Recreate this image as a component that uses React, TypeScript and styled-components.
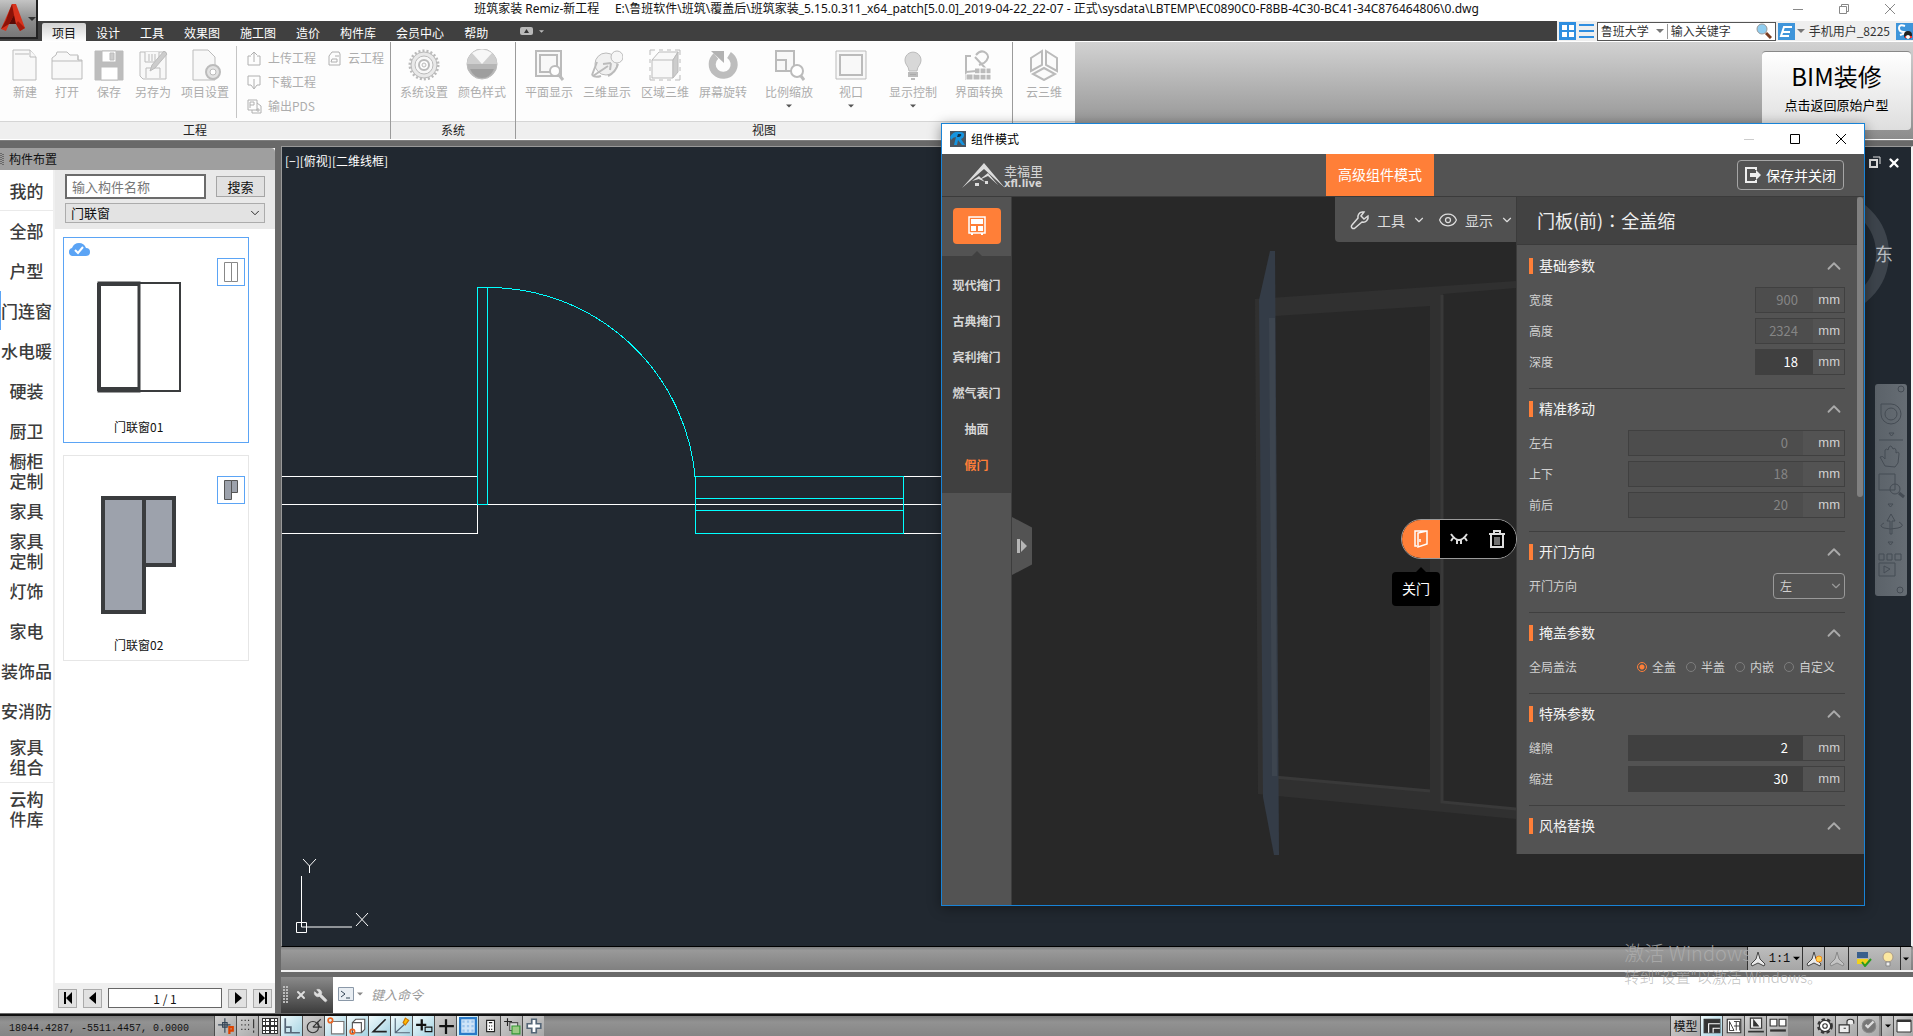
import React from 'react';
import styled, { createGlobalStyle, css } from 'styled-components';
import { ChevronDown, ChevronUp, Eye, Wrench, X } from 'lucide-react';

const orange = '#ff7f38';
const uiFont = '"Noto Sans CJK SC", "Liberation Sans", sans-serif';

const Global = createGlobalStyle`
  *, *::before, *::after { box-sizing: border-box; }
  html, body { margin: 0; height: 100%; overflow: hidden; }
  #root { height: 100%; }
  body { font: 12px/16px ${uiFont}; color: #111; background: #696969; }
  button, input, select { font: inherit; color: inherit; margin: 0; padding: 0; border: 0; background: none; border-radius: 0; outline: none; }
  svg { display: block; flex: none; }
`;

const Shell = styled.div`
  position: relative;
  display: flex;
  flex-direction: column;
  height: 100vh;
  overflow: hidden;
`;

/* ---------- header ---------- */
const Header = styled.header`
  display: flex;
  background: #404040;
`;
const HeaderRows = styled.div`
  flex: 1;
  min-width: 0;
  display: flex;
  flex-direction: column;
`;
const AppButton = styled.button`
  width: 38px;
  height: 39px;
  display: flex;
  align-items: center;
  gap: 2px;
  background: linear-gradient(#c4c4c4, #8c8c8c 55%, #777);
  border-right: 2px solid #222;
  border-bottom: 2px solid #222;
`;
const TitleBar = styled.div`
  display: flex;
  height: 21px;
  background: #fff;
`;
const TitleText = styled.div`
  flex: 1;
  padding-left: 140px;
  text-align: center;
  font-family: "Noto Sans", "Noto Sans CJK SC", sans-serif;
  line-height: 17px;
  white-space: pre;
  overflow: hidden;
`;
const WindowControls = styled.div<{ $h: number }>`
  display: flex;
  height: ${p => p.$h}px;
`;
const WindowButton = styled.button<{ $color: string }>`
  width: 46px;
  display: flex;
  align-items: center;
  justify-content: center;
  color: ${p => p.$color};
`;
const MenuBar = styled.nav`
  display: flex;
  height: 20px;
  padding-left: 4px;
  color: #fff;
`;
const MenuTab = styled.button<{ $active?: boolean }>`
  padding: 0 10px;
  line-height: 17px;
  align-self: flex-end;
  height: 18px;
  ${p => p.$active && css`
    color: #111;
    background: linear-gradient(#d2d2d2, #fdfdfd);
    border-radius: 2px 2px 0 0;
  `}
`;
const MenuExtra = styled.div`
  display: flex;
  align-items: center;
  gap: 6px;
  margin-left: 22px;
`;
const AccountStrip = styled.div`
  margin-left: auto;
  display: flex;
  align-items: center;
  gap: 2px;
  padding-left: 2px;
  background: #efefef;
  color: #333;
`;
const SearchBox = styled.div`
  display: flex;
  align-items: center;
  width: 179px;
  height: 19px;
  padding: 0 3px;
  border: 1px solid #555;
  background: #fff;
  & select { width: 66px; appearance: none; height: 17px; }
  & input { flex: 1; min-width: 0; height: 15px; padding-left: 3px; border-left: 1px solid #999; }
  & input::placeholder { color: #333; opacity: 1; }
`;
const SelectHolder = styled.label`
  display: flex;
  align-items: center;
  position: relative;
  & svg { position: absolute; right: 3px; pointer-events: none; }
`;
const UserName = styled.button`
  display: flex;
  align-items: center;
  gap: 4px;
  padding-right: 4px;
  white-space: nowrap;
`;

/* ---------- ribbon ---------- */
const Ribbon = styled.section`
  position: relative;
  display: flex;
  height: 99px;
  border-top: 1px solid #fff;
  border-bottom: 1px solid #fff;
  background: linear-gradient(#d2d2d2, #8c8c8c);
`;
const Group = styled.div<{ $w: number }>`
  width: ${p => p.$w}px;
  display: flex;
  flex-direction: column;
  background: #fdfdfd;
  border-right: 1px solid #9b9b9b;
  &:last-of-type { border-right: 0; }
`;
const GroupBody = styled.div`
  flex: 1;
  display: flex;
  padding: 0 4px;
  color: #adadad;
`;
const GroupName = styled.div`
  height: 18px;
  line-height: 16px;
  border-top: 1px solid #d5d5d5;
  background: #efefef;
  text-align: center;
  color: #222;
`;
const Tool = styled.button<{ $w: number }>`
  width: ${p => p.$w}px;
  display: flex;
  flex-direction: column;
  align-items: center;
  gap: 3px;
  padding-top: 7px;
  white-space: nowrap;
`;
const SmallTools = styled.div`
  display: grid;
  grid-template: repeat(3, 24px) / 80px auto;
  margin: 4px 0 0 2px;
  padding-left: 10px;
  border-left: 1px solid #c5c5c5;
  height: 72px;
`;
const SmallTool = styled.button<{ $row?: boolean }>`
  display: flex;
  align-items: center;
  gap: 6px;
  white-space: nowrap;
  ${p => p.$row && 'grid-column: 1;'}
`;
const BimCard = styled.button`
  margin: 9px 2px 9px auto;
  padding-bottom: 6px;
  width: 149px;
  display: flex;
  flex-direction: column;
  align-items: center;
  justify-content: center;
  gap: 4px;
  border-radius: 4px;
  border-top: 1px solid #888;
  background: linear-gradient(#fff, #dedede);
  color: #000;
  font-size: 13px;
  line-height: 20px;
  & strong { font-size: 24px; line-height: 30px; font-weight: 400; }
`;

/* ---------- workspace ---------- */
const Workspace = styled.main`
  flex: 1;
  min-height: 0;
  display: flex;
  gap: 6px;
  border-top: 1px solid #7d7d7d;
  background: #696969;
`;
const Palette = styled.aside`
  width: 275px;
  margin: 7px 0 1px;
  display: flex;
  flex-direction: column;
  background: #fff;
`;
const PaletteTitle = styled.div`
  display: flex;
  align-items: center;
  gap: 5px;
  height: 22px;
  background: #9f9f9f;
  border-radius: 0 4px 0 0;
`;
const PaletteBody = styled.div`
  flex: 1;
  min-height: 0;
  display: flex;
`;
const Categories = styled.nav`
  width: 55px;
  padding-top: 1px;
  border-right: 2px solid #efefef;
  display: flex;
  flex-direction: column;
`;
const Category = styled.button<{ $tall?: boolean; $rule?: boolean; $active?: boolean }>`
  height: ${p => (p.$tall ? 52 : 40)}px;
  flex: none;
  font-size: 17px;
  font-weight: 500;
  line-height: 20px;
  color: #3c3c3c;
  white-space: pre;
  ${p => p.$active && 'box-shadow: inset 1px 0 #5ba4f5;'}
  border-bottom: 1px solid ${p => (p.$rule ? '#eaeaea' : 'transparent')};
  display: flex;
  align-items: center;
  justify-content: center;
`;
const Library = styled.div`
  flex: 1;
  min-width: 0;
  display: flex;
  flex-direction: column;
`;
const Filter = styled.div`
  display: grid;
  grid-template-columns: 141px 49px;
  gap: 4px 10px;
  align-items: center;
  padding: 4px 10px 6px;
  background: #e9e9e9;
`;
const NameInput = styled.input`
  height: 25px;
  border: 2px solid #6b6b6b;
  background: #fff;
  padding: 0 5px;
  font-size: 13px;
  &::placeholder { color: #777; opacity: 1; }
`;
const SearchButton = styled.button`
  height: 21px;
  border: 1px solid #a5a5a5;
  background: #e1e1e1;
  font-size: 13px;
  line-height: 18px;
`;
const KindSelect = styled.label`
  position: relative;
  grid-column: 1 / 3;
  display: flex;
  & select { appearance: none; width: 100%; height: 20px; border: 1px solid #acacac; background: #e3e3e3; padding-left: 5px; font-size: 13px; line-height: 18px; }
  & svg { position: absolute; right: 3px; top: 3px; }
`;
const Cards = styled.div`
  flex: 1;
  display: flex;
  flex-direction: column;
  gap: 12px;
  padding: 8px;
`;
const Card = styled.button<{ $on?: boolean }>`
  position: relative;
  width: 186px;
  height: 206px;
  border: 1px solid ${p => (p.$on ? '#5ba4f5' : '#e6e6e6')};
  text-align: left;
  & > span { position: absolute; left: 50px; bottom: 7px; font-size: 12px; }
  & > svg { position: absolute; left: -1px; top: -1px; }
`;
const Thumb = styled.i`
  position: absolute;
  right: 3px;
  top: 20px;
  width: 28px;
  height: 28px;
  border: 1px solid #5ba4f5;
  display: flex;
  align-items: center;
  justify-content: center;
`;
const Pager = styled.div`
  height: 30px;
  display: flex;
  align-items: center;
  gap: 6px;
  padding: 0 3px;
  background: #efefef;
`;
const PageButton = styled.button`
  width: 19px;
  height: 19px;
  border: 1px solid #aaa;
  background: #e1e1e1;
  display: flex;
  align-items: center;
  justify-content: center;
`;
const PageInput = styled.input`
  flex: 1;
  min-width: 0;
  height: 20px;
  border: 1px solid #666;
  background: #fff;
  text-align: center;
`;

const Drawing = styled.section`
  flex: 1;
  min-width: 0;
  display: flex;
  flex-direction: column;
  padding: 5px 0 1px;
`;
const Canvas = styled.div`
  position: relative;
  flex: 1;
  min-height: 0;
  overflow: hidden;
  border: 1px solid #999;
  border-right: 2px solid #f2f2f2;
  border-bottom-color: #000;
  background: #212830;
  color: #fff;
`;
const Plan = styled.svg`
  position: absolute;
  inset: 0;
  width: 100%;
  height: 100%;
`;
const ViewLabel = styled.div`
  position: absolute;
  left: 3px;
  top: 6px;
`;
const Ucs = styled.svg`
  position: absolute;
  left: 13px;
  bottom: 12px;
`;
const CanvasButtons = styled.div`
  position: absolute;
  right: 10px;
  top: 9px;
  display: flex;
  gap: 6px;
`;
const Compass = styled.div`
  position: absolute;
  right: 22px;
  top: 45px;
  width: 124px;
  height: 124px;
  border-radius: 50%;
  border: 13px solid #3d444c;
`;
const East = styled.span`
  position: absolute;
  right: 18px;
  top: 96px;
  font-size: 18px;
  line-height: 20px;
  color: #b8bcc0;
`;
const NavBar = styled.div`
  position: absolute;
  right: 4px;
  top: 237px;
  width: 32px;
  height: 212px;
  border-radius: 3px;
  background: linear-gradient(90deg, #5b6269, #666d74);
`;
const ScrollBand = styled.div`
  display: flex;
  justify-content: flex-end;
  height: 25px;
  border-bottom: 2px solid #f0f0f0;
  background: linear-gradient(#7f7f7f, #999 15%, #808080);
  padding-right: 2px;
`;
const BandCell = styled.button<{ $w: number }>`
  width: ${p => p.$w}px;
  display: flex;
  align-items: center;
  justify-content: center;
  gap: 3px;
  border-left: 1px solid #333;
  background: linear-gradient(#bdbdbd, #a6a6a6);
  font: 12px/22px "Liberation Mono", monospace;
`;
const CommandBar = styled.div`
  display: flex;
  height: 36px;
  margin-top: 5px;
  background: #fff;
`;
const CommandGrip = styled.div`
  width: 52px;
  display: flex;
  align-items: center;
  gap: 6px;
  padding-left: 2px;
  background: linear-gradient(#8a8a8a, #3c3c3c);
`;
const CommandField = styled.label`
  flex: 1;
  display: flex;
  align-items: center;
  gap: 3px;
  padding: 0 5px 2px;
  & input { flex: 1; min-width: 0; height: 24px; padding-left: 5px; font-size: 13px; font-style: italic; }
  & input::placeholder { color: #999; opacity: 1; }
`;
const StatusBar = styled.footer`
  display: flex;
  height: 22px;
  border-top: 2px solid #111;
  background: linear-gradient(#7c7c7c, #929292 30%, #858585);
`;
const Coordinates = styled.div`
  width: 214px;
  padding: 3px 0 0 9px;
  white-space: pre;
  font: 10px/20px "Liberation Mono", monospace;
`;
const StatusCell = styled.button<{ $w?: number; $on?: boolean }>`
  width: ${p => p.$w || 22}px;
  display: flex;
  align-items: center;
  justify-content: center;
  border-left: 1px solid #4c4c4c;
  white-space: nowrap;
  background: ${p => (p.$on ? 'linear-gradient(135deg, #f0fafc, #a5d3e2)' : 'linear-gradient(135deg, #cfcfcf, #a8a8a8)')};
`;
const Space = styled.i<{ $w?: number }>`
  ${p => (p.$w ? `width: ${p.$w}px;` : 'flex: 1;')}
`;
const Watermark = styled.div`
  position: absolute;
  right: 91px;
  bottom: 48px;
  color: rgba(175, 175, 175, .8);
  font-size: 15px;
  line-height: 22px;
  pointer-events: none;
  white-space: nowrap;
  font-weight: 300;
  & b { display: block; font-size: 20px; line-height: 26px; font-weight: 300; }
`;

/* ---------- component window ---------- */
const Window = styled.section`
  position: absolute;
  right: 48px;
  top: 123px;
  width: 924px;
  height: 783px;
  display: flex;
  flex-direction: column;
  border: 1px solid #1883d7;
  background: #282828;
  box-shadow: 0 2px 12px rgba(0, 0, 0, .4);
  color: #ddd;
`;
const WindowTitle = styled.div`
  display: flex;
  align-items: center;
  gap: 5px;
  height: 30px;
  padding-left: 8px;
  background: #fff;
  color: #000;
  & > div { margin-left: auto; }
`;
const WindowHead = styled.div`
  display: flex;
  align-items: center;
  height: 43px;
  padding: 0 20px;
  border-bottom: 1px solid #3b3b3b;
  background: #535353;
`;
const Brand = styled.div`
  display: flex;
  align-items: flex-end;
  width: 364px;
  padding-top: 2px;
`;
const BrandName = styled.div`
  margin-left: -2px;
  font-size: 13px;
  line-height: 14px;
  color: #d6d6d6;
  & b { display: block; font: bold 10px/11px "DejaVu Sans", sans-serif; }
`;
const ModeTab = styled.button`
  align-self: stretch;
  width: 108px;
  background: ${orange};
  color: #fff;
  font-size: 14px;
  line-height: 34px;
  padding-bottom: 2px;
`;
const SaveButton = styled.button`
  margin-left: auto;
  display: flex;
  align-items: center;
  gap: 4px;
  height: 30px;
  width: 107px;
  padding-left: 6px;
  margin-bottom: 1px;
  border: 1px solid #a5a5a5;
  border-radius: 4px;
  color: #fff;
  font-size: 14px;
`;
const WindowBody = styled.div`
  flex: 1;
  min-height: 0;
  display: flex;
  align-items: flex-start;
`;
const Rail = styled.aside`
  width: 70px;
  align-self: stretch;
  background: #535353;
  border-right: 1px solid #3d3d3d;
`;
const RailTop = styled.div`
  position: relative;
  height: 59px;
  padding: 11px;
  &::after { content: ''; position: absolute; left: 30px; bottom: 0; border: 5px solid transparent; border-top: 0; border-bottom-color: #404040; }
`;
const RailButton = styled.button`
  width: 48px;
  height: 36px;
  border-radius: 4px;
  background: ${orange};
  display: flex;
  align-items: center;
  justify-content: center;
`;
const RailList = styled.div`
  display: flex;
  flex-direction: column;
  padding: 11px 0 10px;
  background: #404040;
`;
const RailItem = styled.button<{ $on?: boolean }>`
  height: 36px;
  font-weight: 700;
  color: ${p => (p.$on ? orange : '#d5d5d5')};
`;
const Viewport = styled.div`
  position: relative;
  z-index: 1;
  flex: 1;
  align-self: stretch;
  min-width: 0;
  display: flex;
  justify-content: flex-end;
  align-items: flex-start;
`;
const ViewTools = styled.div`
  position: relative;
  display: flex;
  align-items: center;
  justify-content: space-between;
  height: 45px;
  width: 181px;
  padding: 0 2px 0 15px;
  border-radius: 0 0 0 4px;
  background: #505050;
  font-size: 14px;
`;
const ViewTool = styled.button`
  display: flex;
  align-items: center;
  gap: 7px;
  white-space: nowrap;
`;
const RailHandle = styled.button`
  position: absolute;
  left: 0;
  top: 320px;
  width: 20px;
  height: 58px;
  background: #535353;
  clip-path: polygon(0 0, 100% 18%, 100% 82%, 0 100%);
  display: flex;
  align-items: center;
  justify-content: center;
`;
const Pill = styled.div`
  position: absolute;
  right: -1px;
  top: 322px;
  display: flex;
  width: 116px;
  height: 40px;
  border: 1px solid #9a9a9a;
  border-radius: 20px;
  overflow: hidden;
  background: #000;
`;
const PillButton = styled.button<{ $on?: boolean }>`
  flex: 1;
  display: flex;
  align-items: center;
  justify-content: center;
  background: ${p => (p.$on ? orange : '#000')};
`;
const Tip = styled.div`
  position: absolute;
  right: 76px;
  top: 375px;
  width: 48px;
  height: 34px;
  border-radius: 4px;
  background: #000;
  color: #fff;
  font-size: 14px;
  line-height: 32px;
  text-align: center;
  &::before { content: ''; position: absolute; left: 24px; top: -5px; border: 5px solid transparent; border-top: 0; border-bottom-color: #000; }
`;
const Inspector = styled.aside`
  width: 348px;
  display: flex;
  padding-right: 1px;
  background: #535353;
  border-left: 1px solid #3b3b3b;
`;
const InspectorBody = styled.div`
  flex: 1;
  min-width: 0;
`;
const ScrollThumb = styled.i`
  width: 6px;
  height: 300px;
  border-radius: 3px;
  background: #808080;
`;
const InspectorTitle = styled.h2`
  margin: 0;
  height: 48px;
  padding-left: 20px;
  border-bottom: 1px solid #3b3b3b;
  background: #424242;
  font-size: 18px;
  line-height: 46px;
  font-weight: 400;
  color: #eee;
  white-space: nowrap;
  & span { font-family: "Noto Sans CJK TC", sans-serif; }
`;
const Section = styled.section`
  display: flex;
  flex-direction: column;
  gap: 5px;
  margin: 0 12px;
  padding: 12px 0 13px;
  border-top: 1px solid #3f3f3f;
  &:first-of-type { border-top-color: transparent; }
  &:last-child { padding-bottom: 12px; }
`;
const SectionHead = styled.button`
  display: flex;
  align-items: center;
  width: 100%;
  height: 16px;
  margin-bottom: 8px;
  border-left: 4px solid ${orange};
  color: #f2f2f2;
  font-size: 14px;
  line-height: 16px;
  & span { margin-left: 6px; padding-bottom: 2px; }
  & svg { margin-left: auto; color: #aaa; }
`;
const Row = styled.div`
  display: flex;
  align-items: center;
  justify-content: space-between;
  height: 26px;
  color: #d0d0d0;
`;
const Measure = styled.div<{ $wide?: boolean; $off?: boolean }>`
  display: flex;
  width: ${p => (p.$wide ? 217 : 90)}px;
  height: 26px;
  border: 1px solid #404040;
  line-height: 24px;
  & input {
    flex: 1;
    min-width: 0;
    padding-right: 15px;
    text-align: right;
    font-size: 13px;
    color: ${p => (p.$off ? '#858585' : '#fff')};
    background: ${p => (p.$off ? '#4d4d4d' : '#404040')};
  }
  & span { width: ${p => (p.$wide ? 41 : 31)}px; padding-right: 4px; text-align: right; font-family: "Liberation Sans", sans-serif; font-size: 13px; }
`;
const SidePicker = styled.div`
  position: relative;
  & select { appearance: none; width: 72px; height: 26px; border: 1px solid #999; border-radius: 4px; padding: 0 6px; background: #535353; }
  & svg { position: absolute; right: 2px; top: 6px; color: #999; pointer-events: none; }
`;
const Radios = styled.div`
  display: flex;
  gap: 10px;
  padding-right: 10px;
`;
const RadioLabel = styled.label`
  display: flex;
  align-items: center;
  gap: 5px;
  & input { appearance: none; width: 10px; height: 10px; border: 1px solid #7d7d7d; border-radius: 50%; }
  & input:checked { border-color: ${orange}; background: radial-gradient(circle, ${orange} 0 2px, transparent 3px); }
`;

/* ---------- drawings ---------- */
const Caret = ({ c = '#555', s = 8 }: { c?: string; s?: number }) => (
  <svg width={s} height={s} viewBox="0 0 8 8"><path d="M0 2h8L4 6z" fill={c} /></svg>
);

const ribbonArt: Record<string, React.ReactNode> = {
  new: <><path d="M4 1h17l6 7v23H4z" /><path d="M21 1v7h6M6 5h14" /></>,
  open: <path d="M1 30V9l4-3 1-3h10l3 3h8v5h4v19zM1 12h30M27 7v4" />,
  save: <><path d="M2 2h28v29H2z" fill="#bdbdbd" /><path d="M9 2h14v11H9zM8 18h17v13H8z" fill="#fff" /><path d="M17 4h4v7h-4z" fill="#ccc" /></>,
  saveAs: <><path d="M3 3h26v27H6l-3-3z" /><path d="M8 3v10h14V3M9 29V19h14v10M12 12V5m3 7V5m3 7V5" /><path d="M13 22l2-6L27 2l3 3-12 14z" fill="#ccc" /></>,
  config: <><path d="M4 1h15l7 7v23H4z" /><circle cx="24" cy="23" r="7" fill="#e2e2e2" strokeWidth="2" /><circle cx="24" cy="23" r="3" fill="#fff" /></>,
  gear: <><circle cx="16" cy="16" r="14" strokeDasharray="2 2" strokeWidth="3" /><circle cx="16" cy="16" r="13" fill="#e9e9e9" /><circle cx="16" cy="16" r="9" strokeWidth="1" /><circle cx="16" cy="16" r="5" fill="#fff" strokeWidth="2" /><circle cx="16" cy="16" r="2" /></>,
  palette: <><circle cx="16" cy="15" r="15" fill="#b6b6b6" /><path d="M1 15a15 15 0 0 1 30 0z" fill="#cfcfcf" stroke="none" /><path d="M6 4q10-7 20 0L16 15z" fill="#f7f7f7" stroke="none" /><path d="M4 20h24q-4 9-12 9T4 20z" fill="#9e9e9e" stroke="none" /></>,
  plan: <><path d="M3 2h25v25H3zM7 6h17v17H7z" strokeWidth="2" /><circle cx="22" cy="22" r="5" fill="#fff" strokeWidth="2" /><path d="M26 26l4 5" strokeWidth="3" /></>,
  orbit: <><circle cx="15" cy="15" r="11" fill="#f0f0f0" /><circle cx="26" cy="8" r="6" fill="#f6f6f6" /><path d="M2 27L17 17m3-3l-8 1m8-1l-1 7M1 26q3 3 9 1M1 26l5-13M27 15q-2 8-10 12" fill="none" strokeWidth="2" /></>,
  cube: <><path d="M1 6V1h5M26 1h5v5M1 26v5h5M31 26v5h-5M10 1h4m4 0h4M10 31h4m4 0h4M1 10v4m0 4v4M31 10v4m0 4v4" /><path d="M3 11h21v18H3zM3 11l7-8h19l-5 8" /><path d="M24 11l5-8v20l-5 6z" fill="#ccc" /></>,
  turn: <><path d="M22 6a11 11 0 1 1-13 1" fill="none" strokeWidth="7" stroke="#bdbdbd" /><path d="M4 2h13v12z" fill="#b2b2b2" stroke="none" /></>,
  zoom: <><path d="M3 2h18v20H3zM3 11h10v11H3z" strokeWidth="2" /><circle cx="24" cy="22" r="6" fill="#fff" strokeWidth="2" /><path d="M28 27l3 4" strokeWidth="3" /></>,
  view: <><path d="M1 2h30v28H1z" /><path d="M5 6h22v20H5z" strokeWidth="2" /></>,
  bulb: <><path d="M12 22q0-3-3-7a8 8 0 1 1 14 0q-3 4-3 7z" fill="#d8d8d8" /><path d="M12 24h8v3h-8zM14 30h4" fill="#aaa" strokeWidth="2" /></>,
  swap: <><path d="M3 6v24h10M3 7h5M3 23L24 21 12 8M13 6q5-6 10-2t-2 10l-5 2" fill="none" strokeWidth="2" /><path d="M3 25h25v6H3zM12 19h16v6H12M10 25v6m7-12v12m6-12v12" fill="#bbb" stroke="#fff" /></>,
  cloud3d: <path d="M14 2v14L3 22V9zM18 2v14l11 6V9zM16 19l11 6-11 6-11-6z" strokeWidth="2" fill="#fbfbfb" />,
};
const RibbonIcon = ({ name }: { name: string }) => (
  <svg width="32" height="32" viewBox="0 0 32 32" fill="#f8f8f8" stroke="#bbb">{ribbonArt[name]}</svg>
);

const smallArt: Record<string, string> = {
  up: 'M4 5H1v9h12V5h-3M7 11V1M4 4l3-3 3 3',
  down: 'M4 10H1V1h12v9h-3M7 4v9M4 10l3 4 3-4',
  pds: 'M1 1h9v10H1zM3 9V3h4v3H3M10 4l4 3v7H5v-3M9 11h4M11 9v4',
  cloud: 'M2 14V5l3-4h7l1 2v11zM4 11h6V8H5zM8 5h4',
};
const SmallIcon = ({ name }: { name: string }) => (
  <svg width="15" height="15" viewBox="0 0 15 15" fill="none" stroke="#b0b0b0"><path d={smallArt[name]} /></svg>
);

const ViewDoors = () => (
  <svg width="184" height="204" viewBox="0 0 184 204" fill="none" stroke="#3a3c3e">
    <path d="M76 46h41v108H76" strokeWidth="2" />
    <path d="M36 46h40v108H36z" strokeWidth="3" />
    <path d="M35 47h41M36 46v108M35 152h41" strokeWidth="4" />
    <path d="M6 15a4 4 0 0 1 3-4q2-5 7-5t7 5a4 4 0 0 1 0 8H9a4 4 0 0 1-3-4z" fill="#5ba4f5" stroke="none" />
    <path d="M12 13l3 3 5-6" stroke="#fff" strokeWidth="2" />
  </svg>
);
const PShape = () => (
  <svg width="184" height="204" viewBox="0 0 184 204" fill="#9da2ac" stroke="#3a3c3e" strokeWidth="4">
    <path d="M40 43h41v114H40zM81 43h30v67H81z" />
  </svg>
);

const statusArt: React.ReactNode[] = [
  <><path d="M7 1v13M1 7h11M5 5h4v4H5z" stroke="#345" /><path d="M11 15V9h3v3h-3" stroke="#d40" strokeWidth="2" /></>,
  <><path d="M2 3h9M2 7h9M2 11h9" strokeDasharray="1 2" /><path d="M13 2v8m0 2v2" /></>,
  <path d="M1 1h14v14H1zM4 1v14M8 1v14M12 1v14M1 4h14M1 8h14M1 12h14" fill="#fff" shapeRendering="crispEdges" />,
  <path d="M2 1v13h13M2 9h5v5" stroke="#567" strokeWidth="1.500" />,
  <><circle cx="7" cy="9" r="5" /><path d="M7 9l7-7M7 9h8M11 4l2 5" /></>,
  <><path d="M4 4h11v11H4z" fill="#fff" stroke="#777" /><circle cx="3" cy="3" r="2" stroke="#e62" strokeWidth="1.500" /></>,
  <><path d="M3 5h8v9H3zM3 5l3-3h8v9l-3 3" fill="#fff" stroke="#555" /><circle cx="3" cy="13" r="2" stroke="#e62" strokeWidth="1.500" /></>,
  <path d="M13 2L2 13h12" stroke="#222" strokeWidth="1.500" />,
  <><path d="M2 1v13h13M2 14L13 4" stroke="#567" /><path d="M11 1l3 2-3 4-2-2z" fill="#fb0" stroke="#c70" /></>,
  <><path d="M6 2v10M1 7h9" strokeWidth="2" stroke="#111" /><path d="M9 9h6v4H9z" stroke="#111" /></>,
  <path d="M8 2v13M2 8h13" strokeWidth="2" stroke="#111" />,
  <><rect x="1" y="1" width="14" height="14" fill="#cfe4f8" stroke="#2a7ac8" strokeWidth="2" /><path d="M3 4h10M3 8h10M3 12h10" strokeDasharray="2 2" stroke="#9cc4ec" strokeWidth="2" /></>,
  <><path d="M5 3h7v10H5z" fill="#fff" stroke="#222" /><path d="M7 5h3M7 8h1m1 0h1M7 11h1m1 0h1" stroke="#222" /></>,
  <><path d="M4 1v7M1 4h7" stroke="#222" /><path d="M6 5h7v7H6z" fill="#ddd" stroke="#555" /><path d="M8 8h7v7H8z" fill="#9cca84" stroke="#393" /></>,
  <path d="M6 2h4v4h4v4h-4v4H6v-4H2V6h4z" fill="#fff" stroke="#567" strokeWidth="1.500" />,
];
const activeStatus = [3, 5, 6, 7, 8, 9, 11];
const Mini = ({ children, size = 18 }: { children: React.ReactNode; size?: number }) => (
  <svg width={size} height={size} viewBox="0 0 16 16" fill="none" stroke="#333">{children}</svg>
);
const Annotation = ({ mark, dim }: { mark?: boolean; dim?: boolean }) => (
  <Mini size={16}>
    <path d="M8 1l2 7 5 5-1 2-6-3-6 3-1-2 5-5z" fill={dim ? '#c4c4c4' : '#e9e9e9'} stroke={dim ? '#888' : '#444'} />
    {mark && <circle cx="13" cy="8" r="3" fill="#ffd34d" stroke="#f28a1c" />}
  </Mini>
);

const ribbonGroups = [
  { name: '工程', w: 391, tools: [['新建', 42, 'new'], ['打开', 42, 'open'], ['保存', 42, 'save'], ['另存为', 46, 'saveAs'], ['项目设置', 58, 'config']] },
  { name: '系统', w: 125, tools: [['系统设置', 58, 'gear'], ['颜色样式', 58, 'palette']] },
  { name: '视图', w: 497, tools: [['平面显示', 58, 'plan'], ['三维显示', 58, 'orbit'], ['区域三维', 58, 'cube'], ['屏幕旋转', 58, 'turn'], ['比例缩放', 74, 'zoom', 1], ['视口', 50, 'view', 1], ['显示控制', 74, 'bulb', 1], ['界面转换', 58, 'swap']] },
  { name: ' ', w: 62, tools: [['云三维', 54, 'cloud3d']] },
] as { name: string; w: number; tools: [string, number, string, number?][] }[];

const categories: { t: string; rule?: boolean; tall?: boolean }[] = [
  { t: '我的', rule: true }, { t: '全部' }, { t: '户型' }, { t: '门连窗' }, { t: '水电暖' }, { t: '硬装' }, { t: '厨卫' },
  { t: '橱柜\n定制' }, { t: '家具' }, { t: '家具\n定制' }, { t: '灯饰' }, { t: '家电' }, { t: '装饰品' }, { t: '安消防' },
  { t: '家具\n组合', tall: true, rule: true }, { t: '云构\n件库', tall: true },
];

const Field = ({ label, value, wide, off }: { label: string; value: string; wide?: boolean; off?: boolean }) => (
  <Row>
    <label htmlFor={label}>{label}</label>
    <Measure $wide={wide} $off={off}>
      <input id={label} defaultValue={value} disabled={off} />
      <span>mm</span>
    </Measure>
  </Row>
);
const Panel = ({ title, children }: { title: string; children?: React.ReactNode }) => (
  <Section>
    <SectionHead><span>{title}</span><ChevronUp size={22} strokeWidth={2} /></SectionHead>
    {children}
  </Section>
);

const MinIcon = () => <svg width="10" height="10"><path d="M0 5.500h10" stroke="currentColor" /></svg>;
const MaxIcon = () => <svg width="10" height="10"><path d="M.5.500h9v9h-9z" fill="none" stroke="currentColor" /></svg>;
const RestoreIcon = () => <svg width="10" height="10"><path d="M.5 2.500h7v7h-7zM2.500 2V.500h7v7H8" fill="none" stroke="currentColor" /></svg>;
const CloseIcon = () => <svg width="10" height="10"><path d="M0 0l10 10M10 0L0 10" fill="none" stroke="currentColor" /></svg>;

function ComponentWindow() {
  return (
    <Window>
      <WindowTitle>
        <svg width="16" height="16" viewBox="0 0 16 16"><path d="M0 0h16v16H0z" fill="#4a5560" /><path d="M0 6q3-6 10-5 5 0 4 4-1 3-3 3l4 6h-3L8 9l-1 5H4l2-8q-3 0-5 3z" fill="#1494e0" /><path d="M8 3h3q1 2-2 3H7z" fill="#13334d" /></svg>
        <span>组件模式</span>
        <WindowControls $h={30}>
          <WindowButton $color="#ccc" aria-label="最小化"><MinIcon /></WindowButton>
          <WindowButton $color="#000" aria-label="最大化"><MaxIcon /></WindowButton>
          <WindowButton $color="#000" aria-label="关闭"><CloseIcon /></WindowButton>
        </WindowControls>
      </WindowTitle>
      <WindowHead>
        <Brand>
          <svg width="44" height="26" viewBox="0 0 44 26" fill="#dcdcdc">
            <path d="M0 25L22 0l21 25L22 6z" /><path d="M10 18l7-5 6 6-6-3zM17 17l9-7 10 12-10-9z" /><path d="M13 20h4v3h-4zM23 18h3v3h-3z" />
          </svg>
          <BrandName>幸福里<b>xfl.live</b></BrandName>
        </Brand>
        <ModeTab>高级组件模式</ModeTab>
        <SaveButton>
          <svg width="18" height="18" viewBox="0 0 18 18" fill="none" stroke="#eee" strokeWidth="2"><path d="M12 4V2H2v14h10v-2" /><path d="M6 7h6V4l5 5-5 5v-3H6z" fill="#eee" stroke="none" /></svg>
          保存并关闭
        </SaveButton>
      </WindowHead>
      <WindowBody>
        <Rail>
          <RailTop>
            <RailButton aria-label="柜门">
              <svg width="18" height="20" viewBox="0 0 18 20" fill="none" stroke="#fff"><path d="M1 1h16v16H1z" strokeWidth="1.500" /><path d="M4 17v2M14 17v2" strokeWidth="2" /><path d="M3 3h12v5H3zM3 10h5v5H3zM10 10h5v5h-5z" fill="#fff" stroke="none" /></svg>
            </RailButton>
          </RailTop>
          <RailList>
            {['现代掩门', '古典掩门', '宾利掩门', '燃气表门', '抽面', '假门'].map(t => <RailItem key={t} $on={t === '假门'}>{t}</RailItem>)}
          </RailList>
        </Rail>
        <Viewport>
          <Plan>
            <g transform="translate(-1012 -197)">
              <path d="M1255 299L1516 281v7L1443 294v508l73 6v11L1258 794zM1275 316v460l155 14V306z" fill="#303030" fillRule="evenodd" />
              <path d="M1274 777l156 14M1442 295v507l74 7" fill="none" stroke="#393939" strokeWidth="3" />
              <path d="M1270 251h5l4 604h-5l-11-58-4-497z" fill="#343c47" />
              <path d="M1269 318h6l2 458h-5z" fill="#3d454f" />
            </g>
          </Plan>
          <ViewTools>
            <ViewTool>
              <svg width="20" height="20" viewBox="0 0 20 20" fill="none" stroke="#ddd" strokeWidth="1.500"><path d="M12 2a5 5 0 0 0-4 6l-6 7a2 2 0 0 0 3 3l7-6a5 5 0 0 0 6-6l-4 3-3-3 3-4a5 5 0 0 0-2 0z" /></svg>
              工具<ChevronDown size={14} />
            </ViewTool>
            <ViewTool><Eye size={20} strokeWidth={1.5} />显示<ChevronDown size={14} /></ViewTool>
          </ViewTools>
          <RailHandle aria-label="展开">
            <svg width="10" height="14" viewBox="0 0 10 14" fill="#b5b5b5"><path d="M0 0h3v14H0zM4 1l6 6-6 6z" /></svg>
          </RailHandle>
          <Pill>
            <PillButton $on aria-label="关门">
              <svg width="16" height="20" viewBox="0 0 16 20" fill="none" stroke="#fff" strokeWidth="1.500"><path d="M4 17H2V2h12v13l-9 3V4l9-2M2 2v15M7 10v3" /></svg>
            </PillButton>
            <PillButton aria-label="隐藏">
              <svg width="18" height="12" viewBox="0 0 18 12" fill="none" stroke="#ddd" strokeWidth="2"><path d="M1 1q8 12 16 0M3 5L1 8M7 7v4M11 7v4M15 5l2 3" /></svg>
            </PillButton>
            <PillButton aria-label="删除">
              <svg width="16" height="18" viewBox="0 0 16 18" fill="none" stroke="#ddd" strokeWidth="2"><path d="M0 4h16M5 3V1h6v2M2 4v13h12V4" /><path d="M6 7v8M8 7v8M10 7v8" strokeWidth="1" /></svg>
            </PillButton>
          </Pill>
          <Tip>关门</Tip>
        </Viewport>
        <Inspector>
          <InspectorBody>
            <InspectorTitle>门板(前)<span>：</span>全盖缩</InspectorTitle>
            <Panel title="基础参数">
              <Field label="宽度" value="900" off />
              <Field label="高度" value="2324" off />
              <Field label="深度" value="18" />
            </Panel>
            <Panel title="精准移动">
              <Field label="左右" value="0" wide off />
              <Field label="上下" value="18" wide off />
              <Field label="前后" value="20" wide off />
            </Panel>
            <Panel title="开门方向">
              <Row>
                <label htmlFor="side">开门方向</label>
                <SidePicker><select id="side"><option>左</option><option>右</option></select><ChevronDown size={14} /></SidePicker>
              </Row>
            </Panel>
            <Panel title="掩盖参数">
              <Row>
                <span>全局盖法</span>
                <Radios>
                  {['全盖', '半盖', '内嵌', '自定义'].map((t, i) => (
                    <RadioLabel key={t}><input type="radio" name="cover" defaultChecked={i === 0} />{t}</RadioLabel>
                  ))}
                </Radios>
              </Row>
            </Panel>
            <Panel title="特殊参数">
              <Field label="缝隙" value="2" wide />
              <Field label="缩进" value="30" wide />
            </Panel>
            <Panel title="风格替换" />
          </InspectorBody>
          <ScrollThumb />
        </Inspector>
      </WindowBody>
    </Window>
  );
}

export default function App() {
  return (
    <Shell>
      <Global />
      <Header>
        <AppButton aria-label="应用菜单">
          <svg width="26" height="30" viewBox="0 0 26 30"><path d="M12 0h4l9 24-5 3-4-7H9l-3 7-5-2z" fill="#d8321c" /><path d="M12 0l-6 16L1 25l8-5 5-9z" fill="#8c1208" /><path d="M14 11l-5 9h7z" fill="#5a0a06" /><path d="M16 20l4 7 5-3-7-7z" fill="#a51a0c" /></svg>
          <Caret c="#333" />
        </AppButton>
        <HeaderRows>
          <TitleBar>
            <TitleText>{'班筑家装 Remiz-新工程     E:\\鲁班软件\\班筑\\覆盖后\\班筑家装_5.15.0.311_x64_patch[5.0.0]_2019-04-22_22-07 - 正式\\sysdata\\LBTEMP\\EC0890C0-F8BB-4C30-BC41-34C876464806\\0.dwg'}</TitleText>
            <WindowControls $h={17}>
              <WindowButton $color="#888" aria-label="最小化窗口"><MinIcon /></WindowButton>
              <WindowButton $color="#888" aria-label="还原窗口"><RestoreIcon /></WindowButton>
              <WindowButton $color="#888" aria-label="关闭窗口"><CloseIcon /></WindowButton>
            </WindowControls>
          </TitleBar>
          <MenuBar>
            {['项目', '设计', '工具', '效果图', '施工图', '造价', '构件库', '会员中心', '帮助'].map((t, i) => <MenuTab key={t} $active={i === 0}>{t}</MenuTab>)}
            <MenuExtra>
              <svg width="13" height="8"><rect width="13" height="8" rx="2" fill="#b9b9b9" /><path d="M4 6l2.500-4L9 6z" fill="#333" /></svg>
              <Caret c="#b9b9b9" s={5} />
            </MenuExtra>
            <AccountStrip>
              <svg width="17" height="18"><path d="M0 0h17v18H0z" fill="#2f8ee0" /><path d="M3 3h5v5H3zM10 3h5v5h-5zM3 10h5v5H3zM10 10h5v5h-5z" fill="#fff" /></svg>
              <svg width="17" height="18"><path d="M1 3h15M1 9h15M1 15h15" stroke="#2f8ee0" strokeWidth="2" /></svg>
              <SearchBox>
                <SelectHolder><select aria-label="搜索范围"><option>鲁班大学</option></select><Caret c="#777" /></SelectHolder>
                <input aria-label="关键字" placeholder="输入关键字" />
                <svg width="16" height="16" fill="#8fcdf0" stroke="#999"><circle cx="6" cy="6" r="5" /><path d="M10 10l5 5" stroke="#7a3c20" strokeWidth="3" /></svg>
              </SearchBox>
              <svg width="17" height="17" fill="none" stroke="#fff" strokeWidth="2"><path d="M0 0h17v17H0z" fill="#3f95da" stroke="none" /><path d="M14 4H6L3 13h8M5 9h7" /></svg>
              <UserName><Caret c="#777" />手机用户_8225</UserName>
              <svg width="17" height="17"><path d="M0 0h17v17H0z" fill="#3f95da" /><path d="M9 3Q3 1 3 5t5 4-4 3" fill="none" stroke="#fff" strokeWidth="2" /><circle cx="12" cy="12" r="4" fill="#222" /><path d="M9 13h7v2H9z" fill="#e33" /><circle cx="12" cy="14" r="2" fill="#fff" /></svg>
            </AccountStrip>
          </MenuBar>
        </HeaderRows>
      </Header>

      <Ribbon>
        {ribbonGroups.map(g => (
          <Group key={g.name} $w={g.w}>
            <GroupBody>
              {g.tools.map(([label, w, icon, drop]) => (
                <Tool key={label} $w={w}><RibbonIcon name={icon} />{label}{drop && <Caret s={6} />}</Tool>
              ))}
              {g.name === '工程' && (
                <SmallTools>
                  <SmallTool><SmallIcon name="up" />上传工程</SmallTool>
                  <SmallTool><SmallIcon name="cloud" />云工程</SmallTool>
                  <SmallTool $row><SmallIcon name="down" />下载工程</SmallTool>
                  <SmallTool $row><SmallIcon name="pds" />输出PDS</SmallTool>
                </SmallTools>
              )}
            </GroupBody>
            <GroupName>{g.name}</GroupName>
          </Group>
        ))}
        <BimCard><strong>BIM装修</strong>点击返回原始户型</BimCard>
      </Ribbon>

      <Workspace>
        <Palette>
          <PaletteTitle>
            <svg width="4" height="12"><path d="M1 0v12M3 1v11" stroke="#333" strokeDasharray="1 1" /></svg>
            构件布置
          </PaletteTitle>
          <PaletteBody>
            <Categories>
              {categories.map(c => <Category key={c.t} $tall={c.tall} $rule={c.rule} $active={c.t === '门连窗'}>{c.t}</Category>)}
            </Categories>
            <Library>
              <Filter>
                <NameInput aria-label="构件名称" placeholder="输入构件名称" />
                <SearchButton>搜索</SearchButton>
                <KindSelect><select aria-label="构件类别"><option>门联窗</option></select><ChevronDown size={14} strokeWidth={1.5} /></KindSelect>
              </Filter>
              <Cards>
                <Card $on>
                  <ViewDoors />
                  <Thumb><svg width="16" height="22" fill="none" stroke="#888"><path d="M1.500 1.500h7v19h-7zM8.500 1.500h6v19h-6" /></svg></Thumb>
                  <span>门联窗01</span>
                </Card>
                <Card>
                  <PShape />
                  <Thumb><svg width="16" height="22" fill="#9da2ac" stroke="#555"><path d="M1.500 1.500h7v19h-7zM8.500 1.500h6v12h-6" /></svg></Thumb>
                  <span>门联窗02</span>
                </Card>
              </Cards>
              <Pager>
                <PageButton aria-label="首页"><svg width="10" height="12"><path d="M1 0h2v12H1zM9 0v12L3 6z" /></svg></PageButton>
                <PageButton aria-label="上一页"><svg width="8" height="12"><path d="M7 0v12L0 6z" /></svg></PageButton>
                <PageInput aria-label="页码" defaultValue="1 / 1" />
                <PageButton aria-label="下一页"><svg width="8" height="12"><path d="M1 0v12l7-6z" /></svg></PageButton>
                <PageButton aria-label="末页"><svg width="10" height="12"><path d="M7 0h2v12H7zM1 0v12l6-6z" /></svg></PageButton>
              </Pager>
            </Library>
          </PaletteBody>
        </Palette>

        <Drawing>
          <Canvas>
            <Plan shapeRendering="crispEdges" fill="none" stroke="#fff">
              <g transform="translate(-282 -147)">
                <path d="M282 476.500h195M282 504.500h1000M282 533.500h195.500v-29M903 476.500h300M903 533.500h300" />
                <path d="M477.500 504.500v-217h10v217zM487.500 287.500A208 208 0 0 1 695.500 481M695.500 476.500h208v57h-208zM695.500 498.500h208M695.500 510.500h208" stroke="#0ff" />
              </g>
            </Plan>
            <ViewLabel>[−][俯视][二维线框]</ViewLabel>
            <Ucs width="76" height="76" fill="none" stroke="#fff">
              <path d="M6.500 18v51H57M1.500 64.500h10v10h-10zM8 1l6.500 7L21 1M14.500 8v7M61 55l12 13M73 55L61 68" />
            </Ucs>
            <CanvasButtons>
              <svg width="12" height="12" fill="none" stroke="#ddd" strokeWidth="2"><path d="M1 4h7v7H1z" /><path d="M4 1h7v7" strokeWidth="1" /></svg>
              <X size={14} strokeWidth={4} />
            </CanvasButtons>
            <Compass />
            <East>东</East>
            <NavBar>
              <svg width="32" height="212" fill="none" stroke="#454c54">
                <circle cx="26" cy="5" r="3" /><path d="M6 20h10a10 10 0 1 1-10 10z" /><circle cx="16" cy="30" r="6" />
                <path d="M14 49h5l-2.500 3zM4 56h24M10 82l-5-9q3-2 5 2v-9q2-2 3 0l1-3q2-2 3 0l1 2q2-2 3 1v3q3-2 3 1l-1 9-3 4z" />
                <path d="M4 90h16v16H4z" /><circle cx="20" cy="105" r="5" /><path d="M24 109l5 4" strokeWidth="3" />
                <path d="M13 120h5l-2.500 3zM15 150v-13h-3l4-7 4 7h-3v13zM9 139q-6 3 0 5t14 0 1-6M13 158h5l-2.500 3zM4 170h5v6H4zM12 170h5v6h-5zM20 170h6v6h-6zM4 179h16v13H4zM9 182v7l6-4z" />
                <circle cx="25" cy="206" r="3" />
              </svg>
            </NavBar>
          </Canvas>
          <ScrollBand>
            <BandCell $w={55}><Annotation />1:1<Caret c="#000" s={7} /></BandCell>
            <BandCell $w={22}><Annotation mark /></BandCell>
            <BandCell $w={24}><Annotation dim /></BandCell>
            <BandCell $w={52}>
              <svg width="16" height="16"><path d="M1 1h11v6H1z" fill="#3a5f8c" /><path d="M1 8h11v5H1z" fill="#f2d21c" /><path d="M6 11l3 4 6-7" stroke="#2a9a20" strokeWidth="2" fill="none" /></svg>
              <Space $w={4} />
              <svg width="12" height="16"><circle cx="6" cy="6" r="5" fill="#fbe7a0" stroke="#a98" /><path d="M4 11h4v4H4z" fill="#eee" stroke="#888" /></svg>
            </BandCell>
            <BandCell $w={11}><Caret c="#000" s={6} /></BandCell>
          </ScrollBand>
          <CommandBar>
            <CommandGrip>
              <svg width="6" height="18"><path d="M1 0v18M4 0v18" stroke="#bbb" strokeDasharray="2 1" strokeWidth="2" /></svg>
              <X size={12} color="#ddd" strokeWidth={4} />
              <Wrench size={15} color="#ddd" fill="#ddd" strokeWidth={1} transform="scale(-1 1)" />
            </CommandGrip>
            <CommandField>
              <svg width="16" height="14" fill="#e8edf2" stroke="#8a98a8"><path d="M.5.500h15v13H.5z" /><path d="M3 4l4 3-4 3M8 11h4" fill="none" stroke="#345" /></svg>
              <Caret c="#888" s={6} />
              <input aria-label="命令" placeholder="键入命令" />
            </CommandField>
          </CommandBar>
        </Drawing>
      </Workspace>

      <StatusBar>
        <Coordinates>18044.4287, -5511.4457, 0.0000</Coordinates>
        {statusArt.map((a, i) => <StatusCell key={i} aria-label={`状态 ${i + 1}`} $on={activeStatus.includes(i)}><Mini>{a}</Mini></StatusCell>)}
        <Space />
        <StatusCell $w={30}>模型</StatusCell>
        <StatusCell $on aria-label="模型空间"><Mini><path d="M1 2h14v12H1z" fill="#333" /><path d="M5 14V6h10M9 14v-4h6" stroke="#fff" /></Mini></StatusCell>
        <StatusCell aria-label="布局"><Mini><path d="M2 2h12v12H2z" fill="#fff" /><path d="M4 4v8h4zM8 4h5v8M8 8h5M10 4v8" strokeWidth=".8" /></Mini></StatusCell>
        <StatusCell aria-label="快速查看布局"><Mini><path d="M3 1h10v9H3z" fill="#eee" /><path d="M6 3v5h4z" fill="#333" /><path d="M1 13h14" strokeWidth="1.500" /></Mini></StatusCell>
        <StatusCell aria-label="快速查看图形"><Mini><path d="M1 2h6v6H1zM9 2h6v6H9z" fill="#fff" /><path d="M1 12h14" strokeWidth="2" /></Mini></StatusCell>
        <Space $w={25} />
        <StatusCell aria-label="工作空间"><Mini><circle cx="8" cy="8" r="6" strokeDasharray="3 2" strokeWidth="2" /><circle cx="8" cy="8" r="5" fill="#fff" /><circle cx="8" cy="8" r="2" /></Mini></StatusCell>
        <StatusCell aria-label="锁定"><Mini><path d="M1 7h9v7H1zM8 7V4q0-2 3-2t3 2v2M5 10h2" fill="#eee" /></Mini></StatusCell>
        <StatusCell aria-label="硬件加速"><Mini><circle cx="8" cy="8" r="6" fill="#777" stroke="#888" /><path d="M5 7l2 2 5-5" stroke="#ddd" strokeWidth="2" /></Mini></StatusCell>
        <Space $w={2} />
        <StatusCell $w={12} aria-label="更多"><Caret c="#000" s={6} /></StatusCell>
        <StatusCell $w={20} aria-label="全屏"><Mini size={16}><path d="M1 2h14v12H1z" fill="#fff" /><path d="M1 3h14" strokeWidth="2" /></Mini></StatusCell>
      </StatusBar>

      <Watermark><b>激活 Windows</b>转到"设置"以激活 Windows。</Watermark>
      <ComponentWindow />
    </Shell>
  );
}
